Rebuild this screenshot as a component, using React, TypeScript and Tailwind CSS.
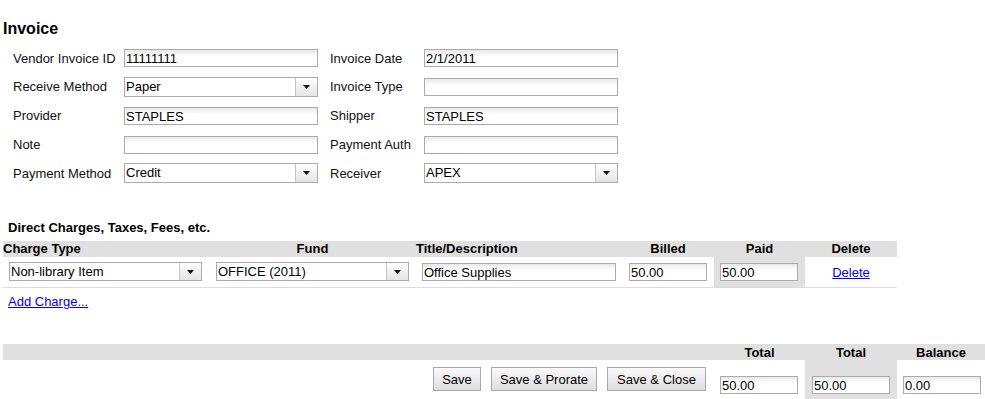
import React from 'react'

function TextBox({ value = '', width }: { value?: string; width: string }) {
  return (
    <input
      readOnly
      value={value}
      className={`${width} h-[18px] border border-[#ababab] bg-linear-to-b from-[#e9e9e9] via-white via-[40%] to-white px-[1px] pt-[1px] text-[13px] leading-[16px] text-black outline-none`}
    />
  )
}

function Dropdown({ value, width, tall = 'h-[20px]' }: { value: string; width: string; tall?: string }) {
  return (
    <div className={`${width} ${tall} flex border border-[#ababab] bg-white`}>
      <span className="flex-1 truncate px-[1px] text-[13px] leading-[18px] text-black">{value}</span>
      <span className="flex w-[22px] items-center justify-center border-l border-[#c4c4c4] bg-linear-to-b from-white to-[#e4e4e4]">
        <svg width="7" height="4" viewBox="0 0 7 4">
          <path d="M0 0h7L3.5 4z" fill="#111" />
        </svg>
      </span>
    </div>
  )
}

function Button({ label, width }: { label: string; width: string }) {
  return (
    <button className={`${width} h-[24px] border border-[#a8a8a8] bg-linear-to-b from-[#fafafa] to-[#dedede] text-[13px] text-black`}>
      {label}
    </button>
  )
}

const rows: [string, React.ReactNode, string, React.ReactNode][] = [
  ['Vendor Invoice ID', <TextBox value="11111111" width="w-[194px]" />, 'Invoice Date', <TextBox value="2/1/2011" width="w-[194px]" />],
  ['Receive Method', <Dropdown value="Paper" width="w-[194px]" />, 'Invoice Type', <TextBox width="w-[194px]" />],
  ['Provider', <TextBox value="STAPLES" width="w-[194px]" />, 'Shipper', <TextBox value="STAPLES" width="w-[194px]" />],
  ['Note', <TextBox width="w-[194px]" />, 'Payment Auth', <TextBox width="w-[194px]" />],
  ['Payment Method', <Dropdown value="Credit" width="w-[194px]" />, 'Receiver', <Dropdown value="APEX" width="w-[194px]" />],
]

export default function App() {
  return (
    <div className="min-h-screen bg-white font-['Liberation_Sans',Arial,sans-serif] text-[13px] text-[#111]">
      <h1 className="ml-[3px] pt-[20px] text-[16px] font-bold leading-[18px] text-black">Invoice</h1>

      {/* Invoice header form */}
      <div className="mt-[6px] pl-[13px]">
        {rows.map(([l1, f1, l2, f2]) => (
          <div key={l1} className="flex h-[28.75px] items-center">
            <span className="w-[111px]">{l1}</span>
            {f1}
            <span className="ml-[12px] w-[94px]">{l2}</span>
            {f2}
          </div>
        ))}
      </div>

      {/* Direct charges */}
      <h2 className="ml-[8px] mt-[32px] font-bold leading-[15px] text-black">Direct Charges, Taxes, Fees, etc.</h2>
      <div className="ml-[3px] mt-[6px] w-[894px]">
        <div className="grid h-[16px] grid-cols-[206px_207px_206px_92px_91px_92px] items-center bg-[#e0e0e0] font-bold leading-[15px] text-black">
          <span>Charge Type</span>
          <span className="text-center">Fund</span>
          <span>Title/Description</span>
          <span className="text-center">Billed</span>
          <span className="text-center">Paid</span>
          <span className="text-center">Delete</span>
        </div>
        <div className="grid h-[31px] grid-cols-[206px_207px_206px_92px_91px_92px] border-b border-[#dcdcdc]">
          <div className="flex items-center pl-[6px]">
            <Dropdown value="Non-library Item" width="w-[193px]" tall="h-[19px]" />
          </div>
          <div className="flex items-center pl-[7px]">
            <Dropdown value="OFFICE (2011)" width="w-[193px]" tall="h-[19px]" />
          </div>
          <div className="flex items-center pl-[6px]">
            <TextBox value="Office Supplies" width="w-[194px]" />
          </div>
          <div className="flex items-center pl-[7px]">
            <TextBox value="50.00" width="w-[78px]" />
          </div>
          <div className="flex items-center bg-[#e0e0e0] pl-[6px]">
            <TextBox value="50.00" width="w-[78px]" />
          </div>
          <div className="flex items-center justify-center pt-[2px]">
            <a href="#" className="text-[#0000ee] underline">Delete</a>
          </div>
        </div>
      </div>
      <a href="#" className="ml-[8px] mt-[6px] inline-block leading-[15px] text-[#0000ee] underline">
        Add Charge...
      </a>

      {/* Totals */}
      <div className="ml-[3px] mt-[33px]">
        <div className="grid h-[16px] grid-cols-[711px_91px_92px_88px] items-center bg-[#e0e0e0] font-bold leading-[15px] text-black">
          <span />
          <span className="text-center">Total</span>
          <span className="text-center">Total</span>
          <span className="text-center">Balance</span>
        </div>
        <div className="grid h-[44px] grid-cols-[711px_91px_92px_88px]">
          <div className="flex items-start justify-end gap-[10px] pr-[8px] pt-[7px]">
            <Button label="Save" width="w-[48px]" />
            <Button label="Save & Prorate" width="w-[106px]" />
            <Button label="Save & Close" width="w-[99px]" />
          </div>
          <div className="pl-[6px] pt-[16px]">
            <TextBox value="50.00" width="w-[78px]" />
          </div>
          <div className="bg-[#e0e0e0] pl-[7px] pt-[16px]">
            <TextBox value="50.00" width="w-[78px]" />
          </div>
          <div className="pl-[6px] pt-[16px]">
            <TextBox value="0.00" width="w-[78px]" />
          </div>
        </div>
      </div>
    </div>
  )
}
